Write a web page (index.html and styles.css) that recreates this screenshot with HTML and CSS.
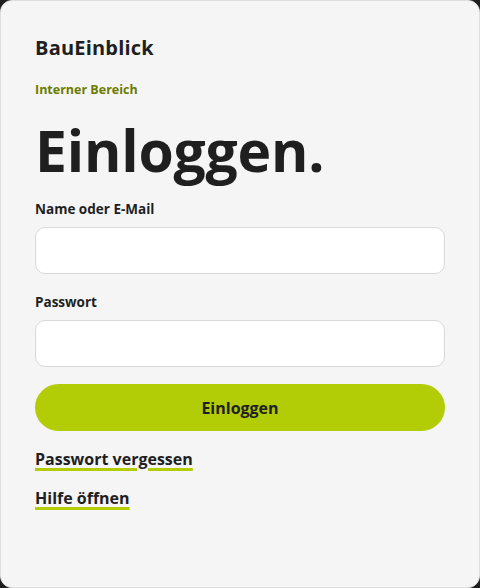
FILE: index.html
```html
<!DOCTYPE html>
<html lang="de">
<head>
<meta charset="utf-8">
<title>BauEinblick – Einloggen</title>
<link rel="stylesheet" href="styles.css">
</head>
<body>
<main class="card">
  <div class="brand">BauEinblick</div>
  <div class="eyebrow">Interner Bereich</div>
  <h1 class="title">Einloggen.</h1>
  <form class="form">
    <label class="label" for="user">Name oder E-Mail</label>
    <input class="input" id="user" type="text">
    <label class="label" for="pw">Passwort</label>
    <input class="input input-last" id="pw" type="password">
    <button class="btn" type="button">Einloggen</button>
  </form>
  <nav class="links">
    <a class="link" href="#">Passwort vergessen</a>
    <a class="link" href="#">Hilfe öffnen</a>
  </nav>
</main>
</body>
</html>
```
FILE: styles.css
```css
* { box-sizing: border-box; }
html, body { margin: 0; height: 100%; }
body {
  background: #1e1e1e;
  font-family: "Open Sans", "Noto Sans", sans-serif;
  color: #1f1f1f;
}
.card {
  height: 588px;
  background: #f5f5f5;
  border: 1px solid #dedede;
  border-radius: 12px;
  padding: 33px 34px 0;
  display: flex;
  flex-direction: column;
}
.brand {
  font-size: 20px;
  font-weight: 700;
  line-height: 28px;
  letter-spacing: 0.2px;
}
.eyebrow {
  margin-top: 19px;
  font-size: 12.5px;
  font-weight: 700;
  line-height: 18px;
  color: #6b7c00;
}
.title {
  margin: 19px 0 0;
  font-size: 57px;
  font-weight: 700;
  line-height: 64px;
  letter-spacing: -0.2px;
}
.form {
  display: flex;
  flex-direction: column;
  margin-top: 18px;
}
.label {
  font-size: 13.5px;
  font-weight: 700;
  line-height: 18px;
  margin-bottom: 9px;
}
.input {
  height: 47px;
  border: 1px solid #d9d9d9;
  border-radius: 10px;
  background: #ffffff;
  margin-bottom: 19px;
  font: inherit;
}
.input-last { margin-bottom: 17px; }
.btn {
  height: 47px;
  border: 0;
  border-radius: 24px;
  background: #b2cc05;
  color: #1f1f1f;
  font-family: inherit;
  font-size: 16px;
  font-weight: 700;
}
.links {
  display: flex;
  flex-direction: column;
  align-items: flex-start;
  gap: 17px;
  margin-top: 17px;
}
.link {
  font-size: 16px;
  font-weight: 700;
  line-height: 22px;
  color: #1f1f1f;
  text-decoration: underline;
  text-decoration-color: #b2cc05;
  text-decoration-thickness: 3px;
  text-underline-offset: 3px;
}
```
